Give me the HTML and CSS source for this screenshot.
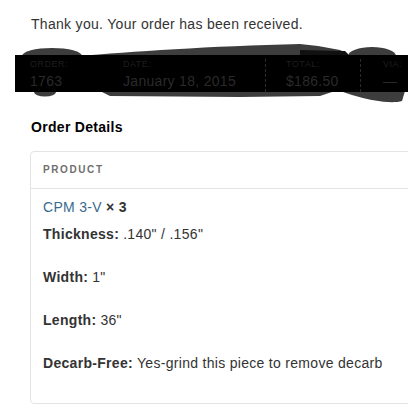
FILE: index.html
```html
<!DOCTYPE html>
<html lang="en">
<head>
<meta charset="utf-8">
<title>Order received</title>
<link rel="stylesheet" href="styles.css">
</head>
<body>
<main class="page">
  <p class="thanks">Thank you. Your order has been received.</p>

  <div class="overview-wrap">
    <svg class="scribble" viewBox="15 44 400 60" width="400" height="60" aria-hidden="true">
      <ellipse cx="52" cy="56" rx="30" ry="8" fill="#3d3d3d"/>
      <path d="M78 56 C130 52 210 46 300 44 L318 46 L340 50 L350 56 Z" fill="#3d3d3d"/>
      <path d="M300 50 L345 51 L350 56 L300 56 Z" fill="#111"/>
      <ellipse cx="372" cy="56" rx="24" ry="9" fill="#3d3d3d"/>
      <ellipse cx="45" cy="92" rx="11" ry="4.5" fill="#3d3d3d"/>
      <path d="M100 91 L335 91 L320 96 L240 97 L110 96 Z" fill="#3d3d3d"/>
      <path d="M340 91 L405 91 L402 101 C392 104 372 101 352 95 Z" fill="#3d3d3d"/>
    </svg>
    <ul class="overview">
      <li class="ov-item ov-order">Order: <strong>1763</strong></li>
      <li class="ov-item ov-date">Date: <strong>January 18, 2015</strong></li>
      <li class="ov-item ov-total">Total: <strong>$186.50</strong></li>
      <li class="ov-item ov-pay">Via: <strong>&mdash;</strong></li>
    </ul>
  </div>

  <h2 class="section-title">Order Details</h2>

  <table class="order-table">
    <thead>
      <tr><th class="col-product">Product</th></tr>
    </thead>
    <tbody>
      <tr>
        <td class="product-cell">
          <a class="product-link" href="#">CPM 3-V</a> <strong class="qty">&times; 3</strong>
          <dl class="meta">
            <div class="meta-row"><dt>Thickness:</dt> <dd>.140" / .156"</dd></div>
            <div class="meta-row"><dt>Width:</dt> <dd>1"</dd></div>
            <div class="meta-row"><dt>Length:</dt> <dd>36"</dd></div>
            <div class="meta-row"><dt>Decarb-Free:</dt> <dd>Yes-grind this piece to remove decarb</dd></div>
          </dl>
        </td>
      </tr>
    </tbody>
  </table>
</main>
</body>
</html>
```

FILE: styles.css
```css
html, body {
  margin: 0;
  padding: 0;
  overflow: hidden;
  background: #ffffff;
}

body {
  font-family: "Liberation Sans", Arial, sans-serif;
  font-size: 14px;
  line-height: 20px;
  color: #333333;
  letter-spacing: 0.3px;
}

.page {
  padding: 14px 0 0 30px;
  width: 420px;
}

.thanks {
  margin: 0;
  padding-left: 1px;
  color: #333;
}

/* redacted order overview */
.overview-wrap {
  position: relative;
  margin: 21px 0 0 -15px;
}

.scribble {
  position: absolute;
  left: 0;
  top: -11px;
  z-index: 0;
}

.overview {
  position: relative;
  z-index: 1;
  list-style: none;
  margin: 0;
  padding: 4px 0 0 15px;
  height: 33px;
  background: #000;
  display: flex;
  align-items: stretch;
}

.ov-item {
  font-size: 9px;
  line-height: 11px;
  text-transform: uppercase;
  letter-spacing: 0.5px;
  color: #1f1f1f;
  white-space: nowrap;
}

.ov-item strong {
  display: block;
  margin-top: 3px;
  font-size: 14px;
  line-height: 16px;
  font-weight: normal;
  text-transform: none;
  letter-spacing: 0.3px;
  color: #2a2a2a;
}

.ov-order { width: 80px; margin-right: 13px; }
.ov-date { width: 142px; border-right: 1px dashed #2a2a2a; margin-right: 20px; }
.ov-total { width: 74px; border-right: 1px dashed #2a2a2a; margin-right: 22px; }
.ov-pay { width: 20px; }

.section-title {
  margin: 25px 0 0 1px;
  font-size: 14px;
  line-height: 20px;
  font-weight: bold;
  color: #000;
}

/* order table card */
.order-table {
  margin-top: 14px;
  width: 400px;
  border: 1px solid #e4e4e4;
  border-radius: 4px;
  border-spacing: 0;
  border-collapse: separate;
}

.col-product {
  text-align: left;
  padding: 12px 12px;
  font-size: 10px;
  line-height: 12px;
  font-weight: bold;
  text-transform: uppercase;
  letter-spacing: 1.6px;
  color: #6f6f6f;
  border-bottom: 1px solid #e4e4e4;
}

.product-cell {
  padding: 8px 12px 8px 12px;
  vertical-align: top;
}

.product-link {
  color: #3a6a8e;
  text-decoration: none;
}

.qty {
  color: #333;
}

.meta {
  margin: 7px 0 22px 0;
  display: flex;
  flex-direction: column;
  gap: 23px;
}

.meta-row {
  display: flex;
  gap: 4px;
}

.meta dt {
  font-weight: bold;
  margin: 0;
}

.meta dd {
  margin: 0;
}
```
